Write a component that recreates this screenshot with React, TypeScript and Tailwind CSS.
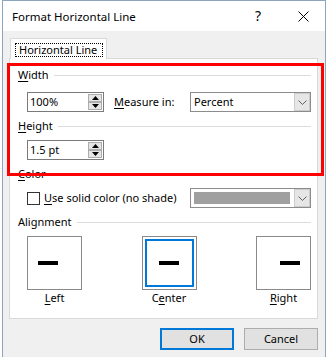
import React from "react";

const FONT = { fontFamily: '"Noto Sans", "Liberation Sans", sans-serif' };

function U({ children }: { children: React.ReactNode }) {
  return <span className="underline decoration-1 underline-offset-[2px]">{children}</span>;
}

function Header({ children, mt }: { children: React.ReactNode; mt: string }) {
  return (
    <div className={`flex items-center h-4 pl-[8px] pr-[6px] ${mt}`}>
      <span className="leading-4">{children}</span>
      <div className="ml-[5px] flex-1 h-px bg-[#dcdcdc]" />
    </div>
  );
}

function Tri({ up }: { up: boolean }) {
  return (
    <svg width="7" height="4" viewBox="0 0 7 4">
      {up ? <polygon points="0,4 7,4 3.5,0" fill="#000" /> : <polygon points="0,0 7,0 3.5,4" fill="#000" />}
    </svg>
  );
}

function Spinner({ value }: { value: string }) {
  return (
    <div className="flex w-[77px] h-[20px] border border-[#7a7a7a] bg-white">
      <div className="flex-1 pl-[2px] leading-[18px]">{value}</div>
      <div className="flex flex-col gap-0 py-[1px] pr-[1px]">
        <div className="w-[14px] h-[8px] border border-[#adadad] bg-[#e5e5e5] flex items-center justify-center">
          <Tri up />
        </div>
        <div className="w-[14px] h-[8px] border border-[#adadad] bg-[#e5e5e5] flex items-center justify-center">
          <Tri up={false} />
        </div>
      </div>
    </div>
  );
}

function Chevron() {
  return (
    <svg width="9" height="5" viewBox="0 0 9 5">
      <polyline points="0.5,0.5 4.5,4.5 8.5,0.5" fill="none" stroke="#606060" strokeWidth="1" />
    </svg>
  );
}

function Select({ children }: { children: React.ReactNode }) {
  return (
    <div className="ml-auto flex w-[121px] h-[20px] border border-[#8c8c8c] bg-white">
      <div className="flex-1 flex items-center">{children}</div>
      <div className="w-[16px] h-full border border-[#cccccc] bg-[#e6e6e6] flex items-center justify-center">
        <Chevron />
      </div>
    </div>
  );
}

function AlignBox({ pos, selected, label }: { pos: "left" | "center" | "right"; selected?: boolean; label: React.ReactNode }) {
  const bar = <div className="w-[20px] h-[4px] bg-black" />;
  const justify = pos === "left" ? "justify-start pl-[8px]" : pos === "right" ? "justify-end pr-[8px]" : "justify-center";
  return (
    <div className="flex flex-col items-center w-[55px]">
      <div className="w-[55px] h-[54px] border border-[#8a8a8a] bg-white p-[2px]">
        <div className={`w-full h-full flex items-center ${justify} ${selected ? "border-2 border-[#0078d7]" : ""}`}>{bar}</div>
      </div>
      <div className="leading-4 mt-0">{label}</div>
    </div>
  );
}

export default function App() {
  return (
    <div className="relative w-[328px] h-[357px] bg-white overflow-hidden text-[11px] text-black" style={FONT}>
      <div className="ml-[2px] w-[324px] h-[360px] border-l border-r border-t border-[#8da5bf] flex flex-col">
        {/* Title bar */}
        <div className="h-[30px] bg-white flex items-center pl-[9px] relative">
          <span className="text-[11.5px] leading-4 mt-[1px]">Format Horizontal Line</span>
          <span className="ml-auto mr-[37px] text-[14px] leading-4">?</span>
          <svg width="11" height="11" viewBox="0 0 11 11" className="mr-[16px]">
            <line x1="0.5" y1="0.5" x2="10.5" y2="10.5" stroke="#000" strokeWidth="1" />
            <line x1="10.5" y1="0.5" x2="0.5" y2="10.5" stroke="#000" strokeWidth="1" />
          </svg>
        </div>
        {/* Body */}
        <div className="flex-1 bg-[#f0f0f0] pt-[7px]">
          {/* Tab */}
          <div className="ml-[7px] w-[97px] h-[21px] -mb-px relative z-10 bg-white border-t border-l border-r border-[#d9d9d9] pt-[4px] pl-[4px]">
            <div className="w-[88px] h-[14px] border border-dotted border-black flex items-center pl-[3px] leading-4 whitespace-nowrap">
              Horizontal Line
            </div>
          </div>
          {/* Panel */}
          <div className="ml-[6px] w-[309px] h-[261px] bg-white border border-[#d9d9d9] pt-[8px]">
            <Header mt="mt-0">
              <U>W</U>idth
            </Header>
            <div className="flex items-center pl-[17px] pr-[6px] mt-[9px]">
              <Spinner value="100%" />
              <span className="ml-[10px] leading-4">
                <U>M</U>easure in:
              </span>
              <Select>
                <span className="pl-[3px] leading-4">Percent</span>
              </Select>
            </div>
            <Header mt="mt-[6px]">
              <U>H</U>eight
            </Header>
            <div className="flex items-center pl-[17px] mt-[6px]">
              <Spinner value="1.5 pt" />
            </div>
            <Header mt="mt-[6px]">
              <U>C</U>olor
            </Header>
            <div className="flex items-center pl-[17px] pr-[6px] mt-[6px]">
              <div className="w-[13px] h-[13px] border border-[#333333] bg-white" />
              <span className="ml-[4px] leading-4">
                <U>U</U>se solid color (no shade)
              </span>
              <Select>
                <div className="ml-[3px] w-[96px] h-[12px] bg-[#a0a0a0]" />
              </Select>
            </div>
            <Header mt="mt-[6px]">Alignment</Header>
            <div className="flex justify-between pl-[17px] pr-[6px] mt-[6px]">
              <AlignBox pos="left" label={<><U>L</U>eft</>} />
              <AlignBox pos="center" selected label={<>C<U>e</U>nter</>} />
              <AlignBox pos="right" label={<><U>R</U>ight</>} />
            </div>
          </div>
          {/* Buttons */}
          <div className="flex justify-end gap-[10px] mr-[7px] mt-[9px]">
            <div className="w-[74px] h-[22px] border-2 border-[#0078d7] bg-[#e1e1e1] flex items-center justify-center leading-4">OK</div>
            <div className="w-[74px] h-[22px] border border-[#adadad] bg-[#e1e1e1] flex items-center justify-center leading-4">Cancel</div>
          </div>
        </div>
      </div>
      {/* Red annotation box */}
      <div className="absolute left-[7px] top-[63px] w-[317px] h-[113px] border-[3px] border-[#ff0000] pointer-events-none" />
    </div>
  );
}
